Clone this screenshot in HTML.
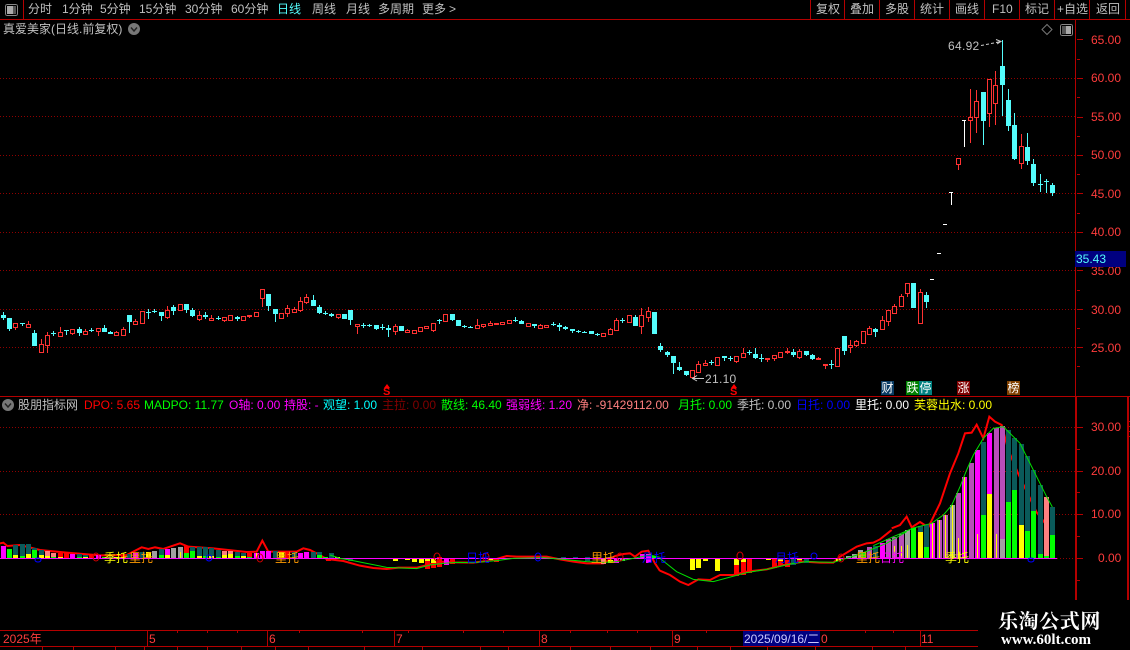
<!DOCTYPE html>
<html><head><meta charset="utf-8"><style>
html,body{margin:0;padding:0;background:#000;width:1130px;height:650px;overflow:hidden}
#r{position:relative;width:1130px;height:650px;overflow:hidden;background:#000;font-family:"Liberation Sans","WenQuanYi Zen Hei","Noto Sans CJK SC",sans-serif;font-size:12px}
#r svg{position:absolute;left:0;top:0}
.t{position:absolute;white-space:nowrap;line-height:14px;font-size:12px;color:#c0c0c0}
.a{color:#ff3c3c;letter-spacing:0}
.b{position:absolute;width:13px;height:14px;top:381px;color:#fff;line-height:14px;text-align:center;font-size:12px}
</style></head><body><div id="r">
<svg id="s" width="1130" height="650" shape-rendering="crispEdges">
<g id="bg" stroke="#900000" stroke-dasharray="1 2" fill="none">
<path d="M0 78.5H1075M0 116.5H1075M0 155.5H1075M0 193.5H1075M0 232.5H1075M0 270.5H1075M0 309.5H1075M0 347.5H1075M0 427.5H1075M0 471.5H1075M0 514.5H1075M1057 558.5H1075"/>
</g>
<g id="c"></g>
<g fill="none" shape-rendering="auto">
<polyline stroke="#ff0000" stroke-width="6" transform="translate(0 530) scale(.33333)" points="0,40 10,38 22,48 60,45 120,60 200,68 300,76 380,75 425,52 445,57 465,52 490,57 510,50 540,40 565,50 640,55 740,66 770,65 787,32 805,65 890,65 910,55 930,60 950,70 985,90"/>
<polyline stroke="#ff0000" stroke-width="6" transform="translate(330 530) scale(.33333)" points="0,88 40,93 90,107 130,114 170,117 205,113 260,113 300,103 330,95 370,97 430,98 470,93 500,87 530,78 560,80 600,80 650,80 690,88 730,95 770,100 820,100 855,78 880,72 900,70 915,80 935,65 955,62 975,100 990,123"/>
<polyline stroke="#ff0000" stroke-width="6" transform="translate(660 530) scale(.33333)" points="0,122 30,135 60,155 85,165 115,148 150,150 180,135 220,135 260,125 320,118 370,105 430,95 480,98 520,98 540,80 590,50 620,40 640,38 660,28 695,0"/>
<polyline stroke="#ff0000" stroke-width="6" transform="translate(860 400) scale(.33333)" points="95,385 120,375 140,350 155,382 180,366 205,382 240,310 270,220 295,160 315,100 335,98 350,74 370,115 388,50 405,65 425,75 445,150 475,222 510,295 530,337 565,382"/>
</g>
<g id="d"></g>
<path d="M0 558.5H1057" stroke="#ff00ff"/>
<g id="d2"></g>
<g fill="none" shape-rendering="auto">
<polyline stroke="#00e000" stroke-width="3" transform="translate(330 530) scale(.33333)" points="0,75 30,85 60,90 110,100 170,112 260,116 300,105 340,100 380,97 430,98 500,92 550,85 640,83 700,88 770,95 820,97 860,95 900,87 960,75 990,82"/>
<polyline stroke="#00e000" stroke-width="3" transform="translate(660 530) scale(.33333)" points="0,85 50,125 100,148 160,155 260,128 320,118 400,100 440,95 520,97 560,85 600,72 680,40 740,5"/>
<polyline stroke="#00e000" stroke-width="3" transform="translate(860 400) scale(.33333)" points="40,437 100,410 160,384 215,370 250,345 275,316 300,260 320,210 340,165 370,115 400,85 430,80 480,130 520,210 560,290 577,321"/>
<g stroke-width="1">
<ellipse cx="96" cy="557" rx="3" ry="4" stroke="#d00000"/><ellipse cx="260" cy="558" rx="3" ry="4" stroke="#d00000"/>
<ellipse cx="38" cy="560" rx="3" ry="2" stroke="#0000ff"/><ellipse cx="209" cy="558" rx="3" ry="3" stroke="#0000ff"/>
<ellipse cx="437" cy="557" rx="3" ry="4" stroke="#d00000"/><ellipse cx="486" cy="557" rx="3" ry="4" stroke="#d00000"/>
<ellipse cx="538" cy="557" rx="3" ry="4" stroke="#0000ff"/><ellipse cx="620" cy="557" rx="3" ry="4" stroke="#d00000"/>
<ellipse cx="740" cy="556" rx="3" ry="4" stroke="#d00000"/><ellipse cx="814" cy="556" rx="3" ry="3" stroke="#0000ff"/>
<ellipse cx="841" cy="558" rx="3" ry="4" stroke="#d00000"/><ellipse cx="1031" cy="560" rx="3" ry="2" stroke="#0000ff"/>
</g>
<path d="M981 45.5 984 45M986 44.5 989 44M991 43.5 994 43M996 42.5 1001 41.5M996 39.5 1001 41.5 997 44" stroke="#c8c8c8"/>
<path d="M693 378.5H704M697 375.5 692.5 378.5 697 381" stroke="#c8c8c8"/>
<path d="M1042 29.5 1047 24.5 1052 29.5 1047 34.5Z" stroke="#777"/>
<path d="M387 384 390 388H384Z M734 384 737 388H731Z" fill="#ff0000"/>
</g>
<!-- frame -->
<g fill="#b40000">
<rect x="0" y="19" width="1130" height="1"/>
<rect x="23" y="0" width="1" height="19"/>
<rect x="810" y="0" width="1" height="19"/><rect x="844" y="0" width="1" height="19"/><rect x="879" y="0" width="1" height="19"/><rect x="914" y="0" width="1" height="19"/><rect x="949" y="0" width="1" height="19"/><rect x="984" y="0" width="1" height="19"/><rect x="1019" y="0" width="1" height="19"/><rect x="1054" y="0" width="1" height="19"/><rect x="1089" y="0" width="1" height="19"/><rect x="1125" y="0" width="1" height="19"/>
<rect x="0" y="396" width="1130" height="1"/>
<rect x="1075" y="19" width="1" height="377"/>
<rect x="1075" y="396" width="2" height="204"/>
<rect x="1127" y="396" width="2" height="204"/>
<rect x="0" y="630" width="978" height="1"/>
<rect x="0" y="646" width="978" height="1"/>
<rect x="147" y="630" width="1" height="17"/><rect x="267" y="630" width="1" height="17"/><rect x="394" y="630" width="1" height="17"/><rect x="539" y="630" width="1" height="17"/><rect x="672" y="630" width="1" height="17"/><rect x="920" y="630" width="1" height="17"/>
</g>
<g id="tk" fill="#b40000"></g>
<rect x="5.5" y="4.5" width="12" height="11" rx="2" fill="none" stroke="#888"/><rect x="7" y="6" width="6" height="8" fill="#aaa"/><rect x="13" y="6" width="3" height="8" fill="#555"/>
<rect x="1060.5" y="24.5" width="12" height="11" rx="2" fill="none" stroke="#888"/><rect x="1062" y="26" width="4" height="8" fill="#555"/><rect x="1066" y="26" width="5" height="8" fill="#aaa"/>
<g shape-rendering="auto">
<circle cx="134" cy="29" r="6" fill="#777"/><path d="M131 27.5 134 31 137 27.5" fill="none" stroke="#222" stroke-width="1.4"/>
<circle cx="8" cy="405" r="6" fill="#777"/><path d="M5 403.5 8 407 11 403.5" fill="none" stroke="#222" stroke-width="1.4"/>
</g>
</svg>

<span class="t" style="left:28px;top:2px">分时</span>
<span class="t" style="left:62px;top:2px">1分钟</span>
<span class="t" style="left:100px;top:2px">5分钟</span>
<span class="t" style="left:139px;top:2px">15分钟</span>
<span class="t" style="left:185px;top:2px">30分钟</span>
<span class="t" style="left:231px;top:2px">60分钟</span>
<span class="t" style="left:277px;top:2px;color:#54fcfc">日线</span>
<span class="t" style="left:312px;top:2px">周线</span>
<span class="t" style="left:346px;top:2px">月线</span>
<span class="t" style="left:378px;top:2px">多周期</span>
<span class="t" style="left:422px;top:2px">更多</span>
<span class="t" style="left:449px;top:2px">&gt;</span>

<span class="t" style="left:816px;top:2px">复权</span>
<span class="t" style="left:850px;top:2px">叠加</span>
<span class="t" style="left:885px;top:2px">多股</span>
<span class="t" style="left:920px;top:2px">统计</span>
<span class="t" style="left:955px;top:2px">画线</span>
<span class="t" style="left:992px;top:2px">F10</span>
<span class="t" style="left:1025px;top:2px">标记</span>
<span class="t" style="left:1057px;top:2px">+自选</span>
<span class="t" style="left:1096px;top:2px">返回</span>

<span class="t" style="left:3px;top:22px">真爱美家(日线.前复权)</span>
<span class="t" style="left:948px;top:39px;letter-spacing:.3px">64.92</span>
<span class="t" style="left:705px;top:372px;letter-spacing:.3px">21.10</span>

<span class="t a" style="left:1091px;top:33px">65.00</span>
<span class="t a" style="left:1091px;top:71px">60.00</span>
<span class="t a" style="left:1091px;top:110px">55.00</span>
<span class="t a" style="left:1091px;top:148px">50.00</span>
<span class="t a" style="left:1091px;top:187px">45.00</span>
<span class="t a" style="left:1091px;top:225px">40.00</span>
<span class="t a" style="left:1091px;top:264px">35.00</span>
<span class="t a" style="left:1091px;top:303px">30.00</span>
<span class="t a" style="left:1091px;top:341px">25.00</span>
<div style="position:absolute;left:1075px;top:251px;width:51px;height:16px;background:#000080"></div>
<span class="t" style="left:1076px;top:252px;color:#54fcfc">35.43</span>

<span class="t a" style="left:1091px;top:420px">30.00</span>
<span class="t a" style="left:1091px;top:464px">20.00</span>
<span class="t a" style="left:1091px;top:507px">10.00</span>
<span class="t a" style="left:1098px;top:551px">0.00</span>

<span class="t" style="left:18px;top:398px">股朋指标网</span>
<span class="t" style="left:84px;top:398px;color:#ff0000">DPO: 5.65</span>
<span class="t" style="left:144px;top:398px;color:#00ff00">MADPO: 11.77</span>
<span class="t" style="left:229px;top:398px;color:#ff00ff">O轴: 0.00</span>
<span class="t" style="left:284px;top:398px;color:#ff00ff">持股: -</span>
<span class="t" style="left:323px;top:398px;color:#00ffff">观望: 1.00</span>
<span class="t" style="left:382px;top:398px;color:#800000">主拉: 0.00</span>
<span class="t" style="left:441px;top:398px;color:#00ff00">散线: 46.40</span>
<span class="t" style="left:506px;top:398px;color:#ff00ff">强弱线: 1.20</span>
<span class="t" style="left:577px;top:398px;color:#ff8080">净: -91429112.00</span>
<span class="t" style="left:678px;top:398px;color:#00ff00">月托: 0.00</span>
<span class="t" style="left:737px;top:398px;color:#c0c0c0">季托: 0.00</span>
<span class="t" style="left:796px;top:398px;color:#0000ff">日托: 0.00</span>
<span class="t" style="left:855px;top:398px;color:#ffffff">里托: 0.00</span>
<span class="t" style="left:914px;top:398px;color:#ffff00">芙蓉出水: 0.00</span>

<div class="b" style="left:881px;background:#0a3c64">财</div>
<div class="b" style="left:906px;background:#008000">跌</div>
<div class="b" style="left:919px;background:#008080">停</div>
<div class="b" style="left:957px;background:#800000">涨</div>
<div class="b" style="left:1007px;background:#804000">榜</div>
<span class="t" style="left:383px;top:387px;color:#f00;font-weight:bold;font-size:11px;line-height:10px">S</span>
<span class="t" style="left:730px;top:387px;color:#f00;font-weight:bold;font-size:11px;line-height:10px">S</span>

<span class="t" style="left:104px;top:551px;color:#ffff00">季托</span>
<span class="t" style="left:129px;top:551px;color:#ff9900">里托</span>
<span class="t" style="left:275px;top:551px;color:#ff9900">里托</span>
<span class="t" style="left:466px;top:551px;color:#0000ff">日托</span>
<span class="t" style="left:591px;top:551px;color:#ff9900">里托</span>
<span class="t" style="left:642px;top:551px;color:#0000ff">月托</span>
<span class="t" style="left:775px;top:551px;color:#0000ff">月托</span>
<span class="t" style="left:856px;top:551px;color:#ff9900">里托</span>
<span class="t" style="left:880px;top:551px;color:#ff00ff">日托</span>
<span class="t" style="left:945px;top:551px;color:#ffff00">季托</span>

<span class="t a" style="left:3px;top:632px">2025年</span>
<span class="t a" style="left:149px;top:632px">5</span>
<span class="t a" style="left:269px;top:632px">6</span>
<span class="t a" style="left:396px;top:632px">7</span>
<span class="t a" style="left:541px;top:632px">8</span>
<span class="t a" style="left:674px;top:632px">9</span>
<span class="t a" style="left:821px;top:632px">0</span>
<span class="t a" style="left:921px;top:632px">11</span>
<div style="position:absolute;left:743px;top:631px;width:77px;height:15px;background:#000080"></div>
<span class="t" style="left:744px;top:632px;color:#c8c8ff">2025/09/16/二</span>

<div style="position:absolute;left:978px;top:600px;width:152px;height:50px;background:#000"></div>
<span class="t" style="left:998px;top:608px;color:#fff;font:bold 20px/24px 'Noto Serif CJK SC',serif;letter-spacing:.6px">乐淘公式网</span>
<span class="t" style="left:1001px;top:631px;color:#fff;font:bold 15px/18px 'Liberation Serif',serif">www.60lt.com</span>
</div>
<script>
var NS='http://www.w3.org/2000/svg';
function R(p,x,y,w,h,f){var e=document.createElementNS(NS,'rect');e.setAttribute('x',x);e.setAttribute('y',y);e.setAttribute('width',w);e.setAttribute('height',h);e.setAttribute('fill',f);p.appendChild(e)}
var C={c:'#54fcfc',r:'#ff3232',w:'#ffffff'};
var cg=document.getElementById('c');
function K(ox,oy,a){a.forEach(function(k){
 var x=Math.round(ox+k[0]/3),hi=Math.round(oy+k[1]/3),t=Math.round(oy+k[2]/3),b=Math.round(oy+k[3]/3),lo=Math.round(oy+k[4]/3),T=k[5],col=C[T];
 if(b<=t)b=t+1;
 if(lo>hi)R(cg,x,hi,1,lo-hi,col);
 if(T=='r'){
  R(cg,x-2,t,5,b-t+1,'#000');
  R(cg,x-2,t,5,1,col);R(cg,x-2,b,5,1,col);R(cg,x-2,t,1,b-t+1,col);R(cg,x+2,t,1,b-t+1,col);
  if(hi<t)R(cg,x,hi,1,t-hi,col);
  if(lo>b)R(cg,x,b,1,lo-b,col);
 }else{
  var w=T=='w'?4:5;R(cg,x-2,t,w,Math.max(b-t,1),col);
 }
})}
K(0,280,[[10,97,105,115,120,'c'],[28,114,114,147,153,'c'],[46,130,130,140,150,'r'],[67,128,128,131,137,'c'],[85,124,132,141,141,'r'],[103,151,159,198,198,'c'],[124,178,192,216,216,'r'],[142,156,165,194,219,'r'],[160,153,159,160,168,'c'],[181,141,156,167,167,'r'],[199,151,151,153,165,'c'],[217,148,148,158,164,'r'],[238,141,147,159,168,'c'],[256,148,154,161,161,'r'],[274,144,149,151,156,'c'],[295,144,144,152,168,'r'],[313,136,144,156,156,'c'],[331,153,156,161,162,'c'],[349,153,156,164,164,'r'],[370,141,147,166,166,'r'],[388,105,105,125,159,'c'],[406,117,123,132,135,'r'],[427,94,94,128,128,'r'],[445,87,95,98,117,'c'],[462,87,92,95,100,'c'],[484,96,96,108,123,'c'],[502,78,90,110,117,'r'],[520,75,81,93,105,'c'],[541,72,72,89,93,'r'],[559,72,72,90,99,'c'],[577,84,90,108,111,'c'],[598,93,106,117,123,'r'],[616,96,104,110,117,'c'],[634,105,114,120,120,'r'],[655,109,114,116,119,'c'],[673,111,111,121,126,'r'],[691,106,106,119,119,'r'],[712,109,112,118,123,'c'],[730,108,108,119,119,'r'],[748,105,106,109,114,'r'],[769,96,96,107,111,'r'],[787,27,27,53,81,'r'],[805,42,42,78,93,'c'],[826,87,87,102,126,'c'],[844,99,99,114,114,'r'],[862,75,84,98,111,'r'],[883,81,87,95,96,'r'],[901,51,63,90,96,'r'],[919,42,51,66,72,'r'],[940,45,60,78,78,'c'],[958,75,81,99,102,'c'],[976,93,98,100,105,'c'],[994,99,102,107,111,'c']]);
K(330,290,[[25,72,72,80,87,'r'],[43,72,72,87,87,'c'],[61,60,60,90,105,'c'],[82,102,102,108,132,'r'],[100,99,105,108,114,'c'],[118,102,105,108,111,'c'],[139,105,105,117,120,'c'],[157,102,110,114,120,'c'],[175,105,114,120,141,'c'],[196,102,108,123,135,'r'],[214,108,108,123,123,'c'],[232,117,120,125,125,'r'],[253,120,120,129,129,'r'],[271,111,111,123,126,'r'],[289,108,108,114,118,'r'],[310,99,99,120,126,'r'],[328,87,90,93,102,'c'],[346,72,72,93,96,'r'],[367,72,72,90,93,'c'],[385,90,90,108,108,'c'],[403,105,108,111,114,'c'],[421,109,111,114,114,'c'],[442,87,105,114,114,'r'],[460,102,102,108,114,'r'],[481,93,99,105,105,'r'],[499,99,99,102,105,'r'],[517,96,96,102,102,'r'],[538,90,90,99,99,'r'],[556,82,89,92,96,'c'],[574,90,93,102,102,'c'],[595,99,99,107,111,'r'],[613,102,102,108,114,'c'],[631,102,105,114,114,'r'],[649,105,105,111,111,'r'],[670,96,101,104,108,'c'],[688,100,105,110,123,'c'],[706,107,111,117,120,'c'],[727,117,117,122,129,'c'],[745,120,123,126,129,'c'],[763,123,125,128,129,'c'],[784,123,123,132,132,'c'],[802,129,132,134,138,'c'],[820,129,129,138,141,'r'],[841,114,117,132,135,'r'],[859,84,90,120,120,'r'],[877,84,90,93,99,'c'],[898,75,75,96,99,'r']]);
K(600,290,[[106,75,81,108,108,'c'],[124,54,75,108,132,'r'],[145,51,63,81,96,'r'],[163,66,66,132,132,'c'],[181,159,168,180,186,'c'],[202,183,186,195,201,'c'],[220,198,198,219,252,'c'],[238,216,231,241,243,'c'],[259,243,243,255,258,'c'],[277,240,240,261,261,'r'],[295,213,222,246,246,'r'],[316,210,219,224,224,'r'],[334,210,216,220,225,'c'],[352,201,201,225,228,'r'],[373,198,198,204,213,'c'],[391,198,203,208,213,'c'],[409,198,198,213,219,'r'],[430,174,189,201,204,'r'],[448,180,186,189,195,'c'],[466,174,192,204,207,'c'],[484,192,203,207,216,'c'],[502,204,204,207,216,'r'],[523,195,195,203,213,'r'],[541,186,186,201,201,'r'],[561,174,183,186,192,'r'],[580,177,186,195,201,'c'],[598,177,183,201,207,'r'],[619,183,183,195,198,'c'],[637,192,195,207,210,'c'],[655,201,204,208,208,'r'],[676,222,222,225,237,'r'],[694,210,222,225,237,'c'],[712,174,174,228,228,'r'],[733,138,138,183,195,'c'],[751,150,165,171,189,'r'],[769,150,153,165,171,'r'],[790,123,123,159,159,'r'],[808,108,114,132,132,'r'],[826,114,117,125,141,'c'],[847,78,90,117,117,'r'],[865,60,60,93,108,'r'],[883,42,48,69,69,'r']]);
K(900,30,[[3,793,798,828,830,'r'],[22,760,760,790,800,'r'],[40,760,760,833,833,'c'],[61,778,787,879,879,'r'],[79,787,796,815,833,'c'],[97,748,748,749,749,'w'],[117,670,670,671,671,'w'],[135,583,583,584,584,'w'],[154,487,487,490,525,'w'],[175,385,385,401,420,'r'],[193,270,270,273,350,'w'],[211,178,262,269,338,'r'],[229,181,213,262,308,'r'],[250,186,186,273,345,'c'],[268,147,147,248,291,'r'],[286,123,165,218,285,'r'],[307,30,108,165,258,'c'],[325,177,210,288,303,'c'],[343,250,285,387,390,'c'],[364,312,348,399,417,'r'],[382,309,351,393,405,'c'],[400,387,402,459,468,'c'],[421,432,462,465,486,'c'],[439,447,453,456,489,'c'],[457,459,465,489,498,'c']]);

var CC={t:'#0a5a5a',g:'#00ff00',y:'#ffff00',m:'#ff00ff',o:'#b84db8',a:'#a0a0a0',s:'#ff8080',r:'#ff0000',n:'#00c000'};
var dg=document.getElementById('d');
function B(ox,oy,a){a.forEach(function(k){
 var x=Math.round(ox+k[0]/3);
 for(var i=1;i<k.length;i+=3){
  var c=k[i+2],t=oy+k[i]/3,b=oy+k[i+1]/3;
  var tt=Math.round(t),bb=Math.round(b);
  if(c=='Y'){R(dg,x,tt,1,bb-tt,CC.y)}else{R(dg,x-2,tt,5,Math.max(bb-tt,1),CC[c])}
 }
})}
B(0,530,[[10,48,87,'m'],[28,57,87,'g'],[46,45,87,'t',75,87,'y'],[67,42,87,'t',78,87,'g'],[85,42,87,'t',72,87,'y'],[103,54,87,'t',60,87,'g'],[124,60,87,'t',75,87,'y'],[142,63,87,'s',78,87,'y'],[160,69,87,'s',82,87,'g'],[181,70,87,'r',82,87,'y'],[199,70,87,'r',84,87,'g'],[217,72,87,'m'],[238,72,87,'t',82,87,'g'],[256,75,87,'t',82,87,'y'],[274,76,87,'r'],[295,75,87,'m'],[313,81,87,'g'],[331,82,87,'t'],[349,81,87,'y'],[370,78,87,'r'],[388,72,87,'t'],[406,68,87,'m'],[427,66,87,'t'],[445,66,87,'y'],[463,63,87,'a'],[484,57,87,'t',75,87,'g'],[502,57,87,'m',75,87,'y'],[520,54,87,'a'],[541,51,87,'a',65,87,'Y'],[559,48,69,'r',69,87,'g'],[577,51,87,'t',63,87,'g'],[598,51,87,'t',78,87,'y'],[616,51,87,'t',78,87,'g'],[634,54,87,'t',78,87,'y'],[655,60,87,'t',82,87,'g'],[673,63,87,'s',75,87,'y'],[691,63,87,'s',72,87,'y'],[712,66,87,'t',78,87,'g'],[730,69,87,'t',78,87,'y'],[748,70,80,'r',80,87,'g'],[769,69,87,'m',69,87,'Y'],[787,63,87,'m'],[805,63,87,'m'],[826,63,87,'t'],[844,66,87,'y'],[862,63,87,'r'],[883,66,87,'t'],[901,69,87,'m'],[919,66,87,'m'],[940,66,87,'t'],[958,66,87,'t',75,87,'g'],[976,81,87,'g'],[985,87,93,'r']]);
B(330,530,[[3,70,85,'t'],[20,80,87,'y'],[60,84,93,'t'],[80,84,87,'y'],[195,85,93,'y'],[232,85,90,'y'],[252,85,96,'y'],[272,85,99,'y'],[290,85,93,'y',94,117,'r'],[310,85,99,'y',99,114,'r'],[328,82,110,'r'],[347,85,105,'m'],[367,85,101,'r'],[480,85,90,'y'],[498,85,95,'r'],[530,85,88,'y'],[575,85,88,'g'],[595,85,88,'y'],[640,85,88,'y'],[655,85,88,'y'],[700,82,88,'t'],[735,82,88,'t'],[770,82,92,'t'],[820,88,102,'s'],[840,90,99,'y'],[858,85,98,'m'],[877,85,94,'a'],[897,85,88,'a'],[935,72,85,'m'],[953,72,100,'m'],[968,78,85,'g']]);
B(660,530,[[97,85,120,'y'],[115,85,114,'y'],[136,85,93,'y'],[172,85,123,'y'],[229,85,105,'y',105,138,'r'],[250,85,96,'y',96,135,'r'],[268,85,130,'r'],[325,85,90,'y'],[343,85,115,'r'],[361,85,108,'r',85,92,'y'],[382,90,110,'r'],[400,85,105,'t'],[418,85,98,'r',85,90,'y'],[439,85,99,'t'],[535,85,93,'y'],[563,78,85,'a'],[582,72,85,'a'],[601,60,85,'a']]);
B(860,400,[[8,455,475,'g'],[28,441,475,'o'],[46,437,475,'t'],[67,430,475,'m'],[85,418,475,'o'],[103,411,475,'o',437,475,'Y'],[122,402,475,'o',437,475,'Y'],[142,390,475,'a',435,475,'Y'],[160,384,475,'g'],[181,377,475,'t',396,475,'y'],[199,374,475,'t',441,475,'g'],[217,370,475,'m',370,475,'Y'],[238,360,475,'o',360,475,'Y'],[256,345,475,'o',345,475,'Y'],[275,316,475,'a',316,475,'Y'],[295,279,475,'o',414,475,'Y'],[313,231,475,'m',231,475,'Y'],[332,189,475,'o'],[350,150,475,'m',402,475,'Y'],[370,125,475,'t',345,475,'g'],[388,99,475,'m',281,475,'y'],[407,84,475,'o',402,475,'Y'],[427,78,417,'o',417,475,'a'],[445,90,475,'t',306,475,'g'],[463,114,475,'t',270,475,'g'],[484,133,475,'t',375,475,'y'],[502,168,475,'t',393,475,'g'],[520,210,475,'t',333,475,'g'],[541,255,475,'t',462,475,'g'],[559,291,475,'s',468,475,'g'],[577,321,475,'t',405,475,'g']]);

var tk=document.getElementById('tk');
[[39,7],[59,4],[78,7],[97,4],[117,7],[136,4],[155,7],[174,4],[193,7],[213,4],[232,7],[251,4],[270,7],[290,4],[309,7],[328,4],[347,7],[366,4],[427,7],[449,4],[471,7],[492,4],[514,7],[536,4],[558,7],[580,4]].forEach(function(a){R(tk,1077,a[0],a[1]-1,1,'#b40000')});
[421,426,431,436].forEach(function(y){R(tk,1129,y,1,1,'#b40000')});
[177,207,237,299,362,408,463,503,570,607,637,706,765,865,893].forEach(function(x){R(tk,x,631,1,2,'#b40000')});
[42,73,115,144,177,207,241,275,308,364,422,480,508,570,610,650,697,730,767,815,872,905].forEach(function(x){R(tk,x,647,1,3,'#b40000')});
</script>
</body></html>
